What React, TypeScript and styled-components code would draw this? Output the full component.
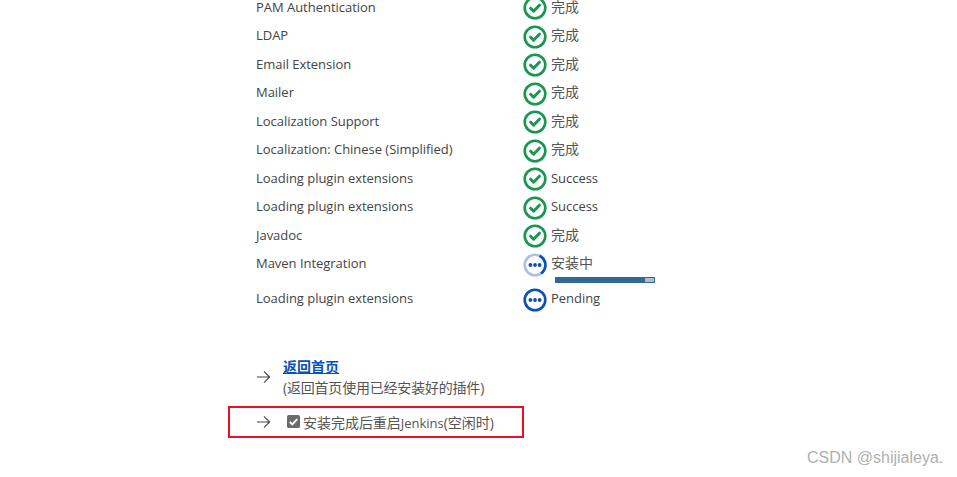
import React from 'react';
import styled, { createGlobalStyle } from 'styled-components';

type Status = 'done' | 'running' | 'pending';

interface Plugin {
  name: string;
  status: Status;
  label: string;
  progress?: number;
}

const plugins: Plugin[] = [
  { name: 'PAM Authentication', status: 'done', label: '完成' },
  { name: 'LDAP', status: 'done', label: '完成' },
  { name: 'Email Extension', status: 'done', label: '完成' },
  { name: 'Mailer', status: 'done', label: '完成' },
  { name: 'Localization Support', status: 'done', label: '完成' },
  { name: 'Localization: Chinese (Simplified)', status: 'done', label: '完成' },
  { name: 'Loading plugin extensions', status: 'done', label: 'Success' },
  { name: 'Loading plugin extensions', status: 'done', label: 'Success' },
  { name: 'Javadoc', status: 'done', label: '完成' },
  { name: 'Maven Integration', status: 'running', label: '安装中', progress: 91 },
  { name: 'Loading plugin extensions', status: 'pending', label: 'Pending' },
];

const GlobalStyle = createGlobalStyle`
  html, body {
    margin: 0;
    padding: 0;
    height: 100%;
    overflow: hidden;
    background: #fff;
  }
  body {
    font-family: "Open Sans", "Noto Sans CJK SC", sans-serif;
    font-size: 13px;
    letter-spacing: -0.03px;
    color: #444;
  }
`;

const StatusIcon: React.FC<{ status: Status }> = ({ status }) => {
  if (status === 'done') {
    return (
      <IconSvg viewBox="0 0 24 24">
        <circle cx="12" cy="12" r="10.3" fill="none" stroke="#1a9650" strokeWidth="2.6" />
        <path d="M7.6 12.2l3 3 5.8-6" fill="none" stroke="#1a9650" strokeWidth="3" strokeLinecap="round" strokeLinejoin="round" />
      </IconSvg>
    );
  }
  return (
    <IconSvg viewBox="0 0 24 24">
      {status === 'running' ? (
        <>
          <circle cx="12" cy="12" r="10.3" fill="none" stroke="#a9c1e8" strokeWidth="2.6" />
          <path d="M16.5 2.7a10.3 10.3 0 0 1 1.6 17.7" fill="none" stroke="#0b4fb8" strokeWidth="2.6" />
        </>
      ) : (
        <circle cx="12" cy="12" r="10.3" fill="none" stroke="#0b4fb8" strokeWidth="2.6" />
      )}
      <circle cx="7.4" cy="12" r="1.9" fill="#0b4fb8" />
      <circle cx="12" cy="12" r="1.9" fill="#0b4fb8" />
      <circle cx="16.6" cy="12" r="1.9" fill="#0b4fb8" />
    </IconSvg>
  );
};

const ArrowIcon = () => (
  <ArrowSvg viewBox="0 0 16 14">
    <path d="M1 7h13.5M8.5 1l6 6-6 6" fill="none" stroke="#444" strokeWidth="1.2" />
  </ArrowSvg>
);

const App: React.FC = () => (
  <Page>
    <GlobalStyle />
    <PluginList>
      {plugins.map((plugin, i) => (
        <PluginRow key={i} $tall={plugin.progress !== undefined}>
          <PluginName>{plugin.name}</PluginName>
          <StatusCell>
            <StatusLine>
              <StatusIcon status={plugin.status} />
              <StatusLabel $cjk={/[^\x00-\x7f]/.test(plugin.label)}>{plugin.label}</StatusLabel>
            </StatusLine>
            {plugin.progress !== undefined && (
              <ProgressTrack>
                <ProgressFill style={{ width: `${plugin.progress}%` }} />
              </ProgressTrack>
            )}
          </StatusCell>
        </PluginRow>
      ))}
    </PluginList>

    <ActionRow>
      <ArrowIcon />
      <ActionText>
        <HomeLink href="#">返回首页</HomeLink>
        <ActionHint>(返回首页使用已经安装好的插件)</ActionHint>
      </ActionText>
    </ActionRow>

    <RestartBox>
      <ArrowIcon />
      <RestartLabel>
        <FakeCheck viewBox="0 0 14 14">
          <rect width="14" height="14" rx="2" fill="#6b6b6b" />
          <path d="M3 7.4l2.7 2.7L11 4.4" fill="none" stroke="#fff" strokeWidth="2" />
        </FakeCheck>
        <RestartText>安装完成后重启<Latin>Jenkins</Latin>(空闲时)</RestartText>
      </RestartLabel>
    </RestartBox>

    <Watermark>CSDN @shijialeya.</Watermark>
  </Page>
);

const Page = styled.div`
  position: relative;
  width: 957px;
  height: 477px;
  overflow: hidden;
`;

const PluginList = styled.div`
  margin-top: -7.5px;
  padding-left: 256px;
`;

const PluginRow = styled.div<{ $tall: boolean }>`
  display: grid;
  grid-template-columns: 267px 1fr;
  height: ${({ $tall }) => ($tall ? '35px' : '28.5px')};
`;

const PluginName = styled.div`
  line-height: 28px;
`;

const StatusCell = styled.div`
  display: flex;
  flex-direction: column;
`;

const StatusLine = styled.div`
  display: flex;
  align-items: flex-start;
  gap: 4px;
  padding-top: 3.5px;
`;

const IconSvg = styled.svg`
  width: 24px;
  height: 24px;
  flex: none;
`;

const StatusLabel = styled.span<{ $cjk: boolean }>`
  font-size: ${({ $cjk }) => ($cjk ? '14px' : '13px')};
  line-height: ${({ $cjk }) => ($cjk ? '20px' : '22px')};
  margin-top: ${({ $cjk }) => ($cjk ? '0.5px' : '-0.5px')};
  color: ${({ $cjk }) => ($cjk ? '#555' : '#444')};
`;

const ProgressTrack = styled.div`
  box-sizing: border-box;
  width: 100px;
  height: 6px;
  margin: 0 0 0 32px;
  background: #bbb;
  border: 1px solid #336699;
`;

const ProgressFill = styled.div`
  height: 100%;
  background: #336699;
`;

const ActionRow = styled.div`
  display: flex;
  align-items: center;
  gap: 12px;
  margin-top: 43px;
  padding-left: 256px;
`;

const ArrowSvg = styled.svg`
  width: 15px;
  height: 14px;
  flex: none;
`;

const ActionText = styled.div`
  display: flex;
  flex-direction: column;
  font-size: 14px;
  line-height: 21px;
  letter-spacing: -0.2px;
  color: #555;
`;

const HomeLink = styled.a`
  color: #0b4fb8;
  font-weight: 700;
  letter-spacing: 0;
  text-decoration: underline;
`;

const ActionHint = styled.span``;

const RestartBox = styled.div`
  box-sizing: border-box;
  display: flex;
  align-items: center;
  gap: 16px;
  width: 296px;
  height: 32px;
  margin: 8px 0 0 228px;
  padding: 1px 0 0 26px;
  border: 2px solid #e81123;
`;

const RestartLabel = styled.label`
  display: flex;
  align-items: center;
  gap: 3px;
`;

const RestartText = styled.span`
  font-size: 14px;
  color: #555;
`;

const Latin = styled.span`
  font-size: 13px;
`;

const FakeCheck = styled.svg`
  width: 13px;
  height: 13px;
  flex: none;
  margin-top: -2px;
`;

const Watermark = styled.div`
  position: absolute;
  left: 807px;
  top: 449px;
  font-family: "Liberation Sans", sans-serif;
  font-size: 16px;
  letter-spacing: 0;
  line-height: 18px;
  color: #b0b0b0;
`;

export default App;
